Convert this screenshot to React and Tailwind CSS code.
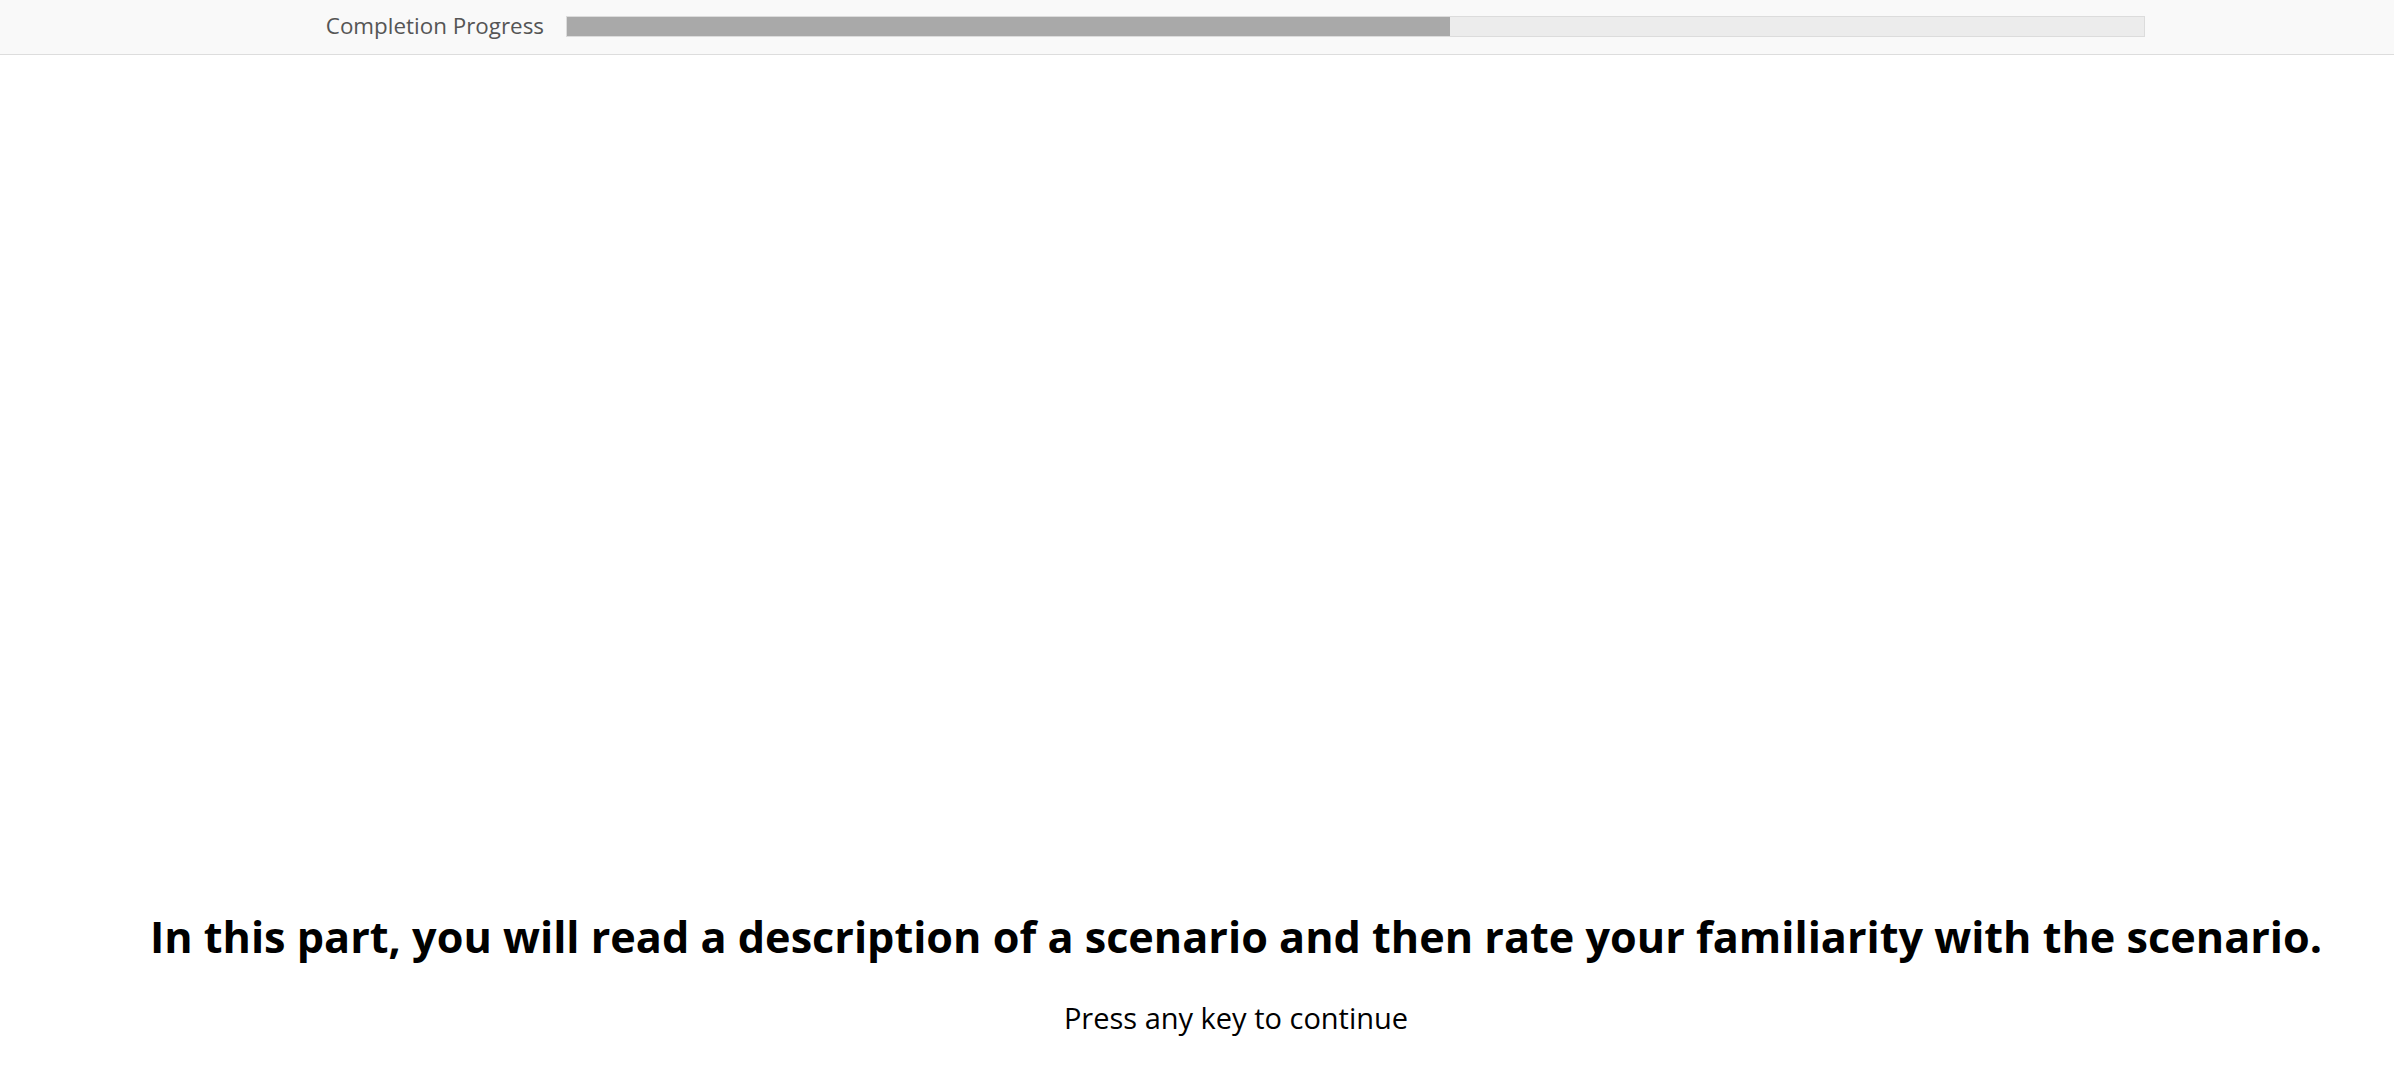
import React from 'react';

export default function App() {
    const progress = 56;

    return (
        <div className="min-h-screen bg-white font-['Open_Sans',sans-serif] text-black">
            {/* Progress header */}
            <div className="h-[55px] pb-[2px] bg-[#f9f9f9] border-b border-[#dddddd] flex items-center">
                <div className="w-[566px] pr-[22px] text-right text-[22.4px] text-[#555555]">
                    Completion Progress
                </div>
                <div className="w-[1579px] h-[21px] bg-[#ececec] border border-[#dcdcdc] flex">
                    <div className="h-full bg-[#a9a9a9]" style={{ width: `${progress}%` }} />
                </div>
            </div>

            <div className="pt-[852px] pl-[78px] flex flex-col items-center">
                <h1 className="text-[43.2px] font-bold leading-[1.4]">
                    In this part, you will read a description of a scenario and then rate your familiarity with the scenario.
                </h1>
                <p className="mt-[29px] text-[29px]">Press any key to continue</p>
            </div>
        </div>
    );
}
